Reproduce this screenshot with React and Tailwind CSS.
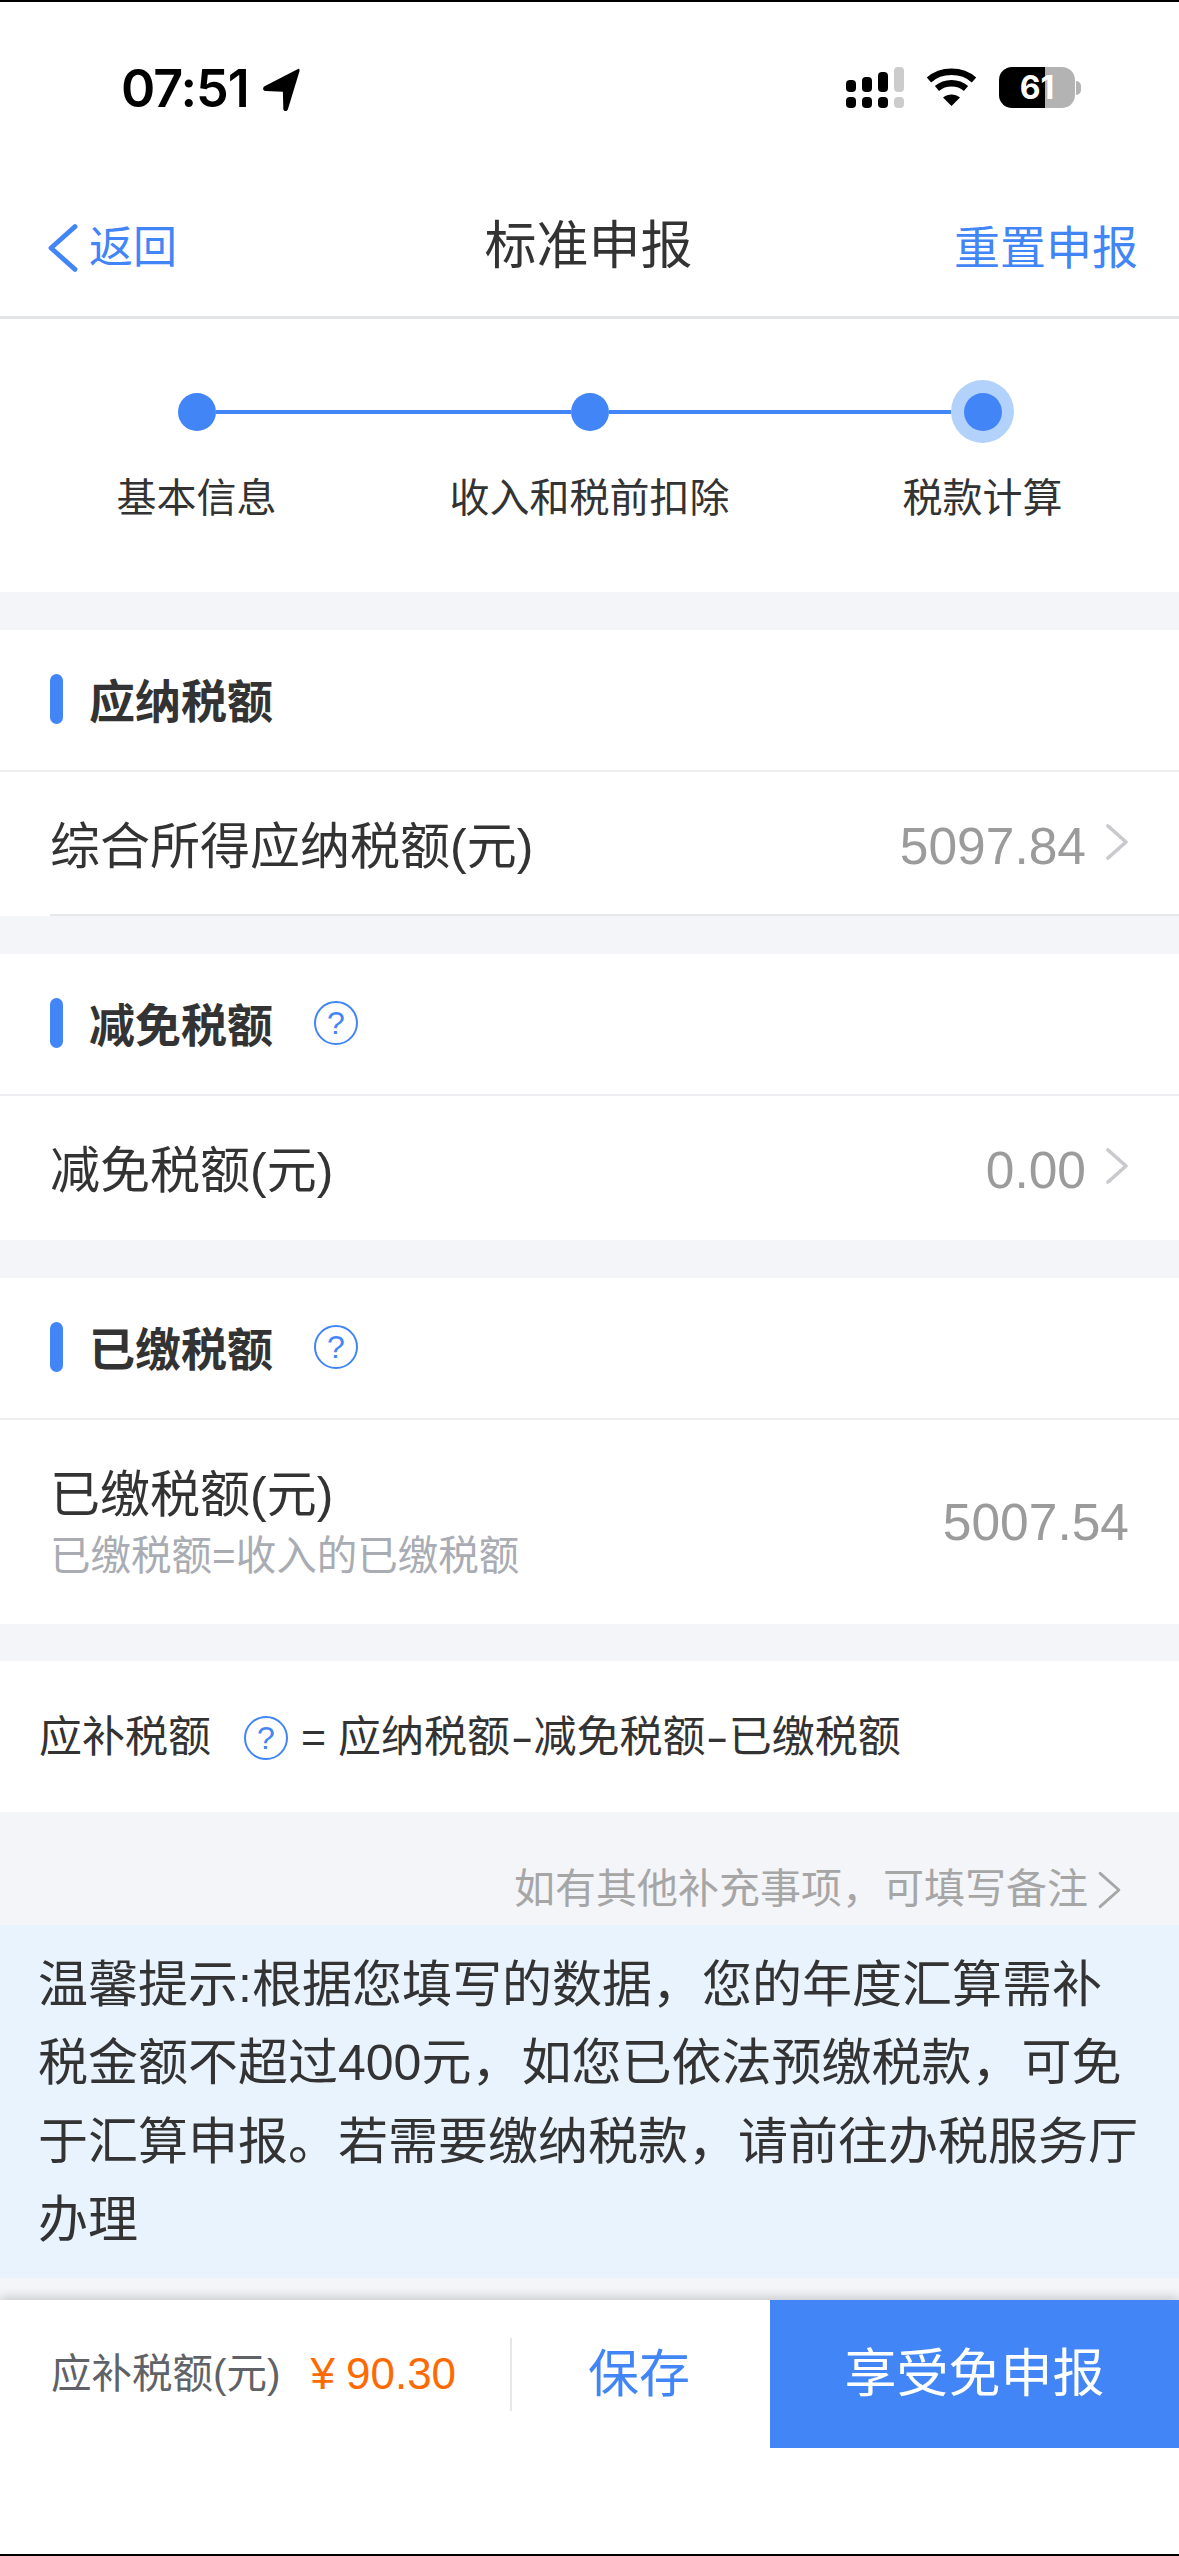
import React from 'react';

const BLUE = '#4285f6';

function Chevron({ className, color = '#c8c9cd', width = 3.6 }) {
  return (
    <svg viewBox="0 0 24 36" className={className} fill="none">
      <path d="M3 2 L21 18 L3 34" stroke={color} strokeWidth={width} strokeLinecap="round" strokeLinejoin="round" />
    </svg>
  );
}

function Help() {
  return (
    <span className="flex h-[44px] w-[44px] shrink-0 items-center justify-center rounded-full border-2 border-[#4285f6] text-[32px] font-light leading-none text-[#4285f6]">
      ?
    </span>
  );
}

function SectionHeader({ title, help }) {
  return (
    <div className="flex h-[142px] items-center border-b-2 border-[#eceef1] pl-[50px]">
      <span className="mb-[2px] h-[50px] w-[13px] rounded-full bg-[#4285f6]" />
      <span className="ml-[26px] mt-[4px] text-[46px] font-bold leading-none text-[#333]">{title}</span>
      {help && (
        <span className="mb-[2px] ml-[41px]">
          <Help />
        </span>
      )}
    </div>
  );
}

function ValueRow({ label, value, divider }) {
  return (
    <div className="relative flex h-[144px] items-center pl-[50px] pr-[50px] pt-[6px]">
      <span className="text-[50px] leading-none text-[#333]">{label}</span>
      <span className="ml-auto flex items-center">
        <span className="text-[51.5px] leading-none text-[#9b9b9b]">{value}</span>
        <Chevron className="mb-[10px] ml-[19px] h-[36px] w-[24px]" />
      </span>
      {divider && <span className="absolute bottom-0 left-[50px] right-0 h-[2px] bg-[#e6e8ec]" />}
    </div>
  );
}

function Band({ h }) {
  return <div className={h + ' bg-[#f4f5f9]'} />;
}

function StatusBar() {
  return (
    <div className="flex h-[116px] items-start pl-[121px] pr-[98px] pt-[60px]">
      <span className="font-['Inter',sans-serif] text-[52px] font-semibold leading-[54px] tracking-[-1px] text-black">07:51</span>
      <svg viewBox="0 0 40 48" className="ml-[13px] mt-[6px] h-[44px] w-[39px]">
        <path d="M38 1 C39.5 0.5 40 2 39.6 3.5 L27 45 C26 48 22 47.5 22 44.5 L21.5 26 L2.5 25 C-0.5 24.8 -0.8 21.5 1.5 20 Z" fill="#000" />
      </svg>
      <div className="ml-auto flex items-start pt-[5px]">
        <svg viewBox="0 0 58 41" className="h-[41px] w-[58px]">
          <rect x="0" y="13" width="10" height="12" rx="4" fill="#000" />
          <rect x="16" y="10" width="10" height="15" rx="4" fill="#000" />
          <rect x="32" y="5" width="10" height="20" rx="4" fill="#000" />
          <rect x="48" y="0" width="10" height="25" rx="4" fill="#ccc" />
          <rect x="0" y="30" width="10" height="11" rx="4" fill="#000" />
          <rect x="16" y="30" width="10" height="11" rx="4" fill="#000" />
          <rect x="32" y="30" width="10" height="11" rx="4" fill="#000" />
          <rect x="48" y="30" width="10" height="11" rx="4" fill="#ccc" />
        </svg>
        <svg viewBox="0 0 51 38" className="ml-[22px] mt-[1px] h-[38px] w-[51px]" fill="none">
          <path d="M3 12 C15 1 36 1 48 12" stroke="#000" strokeWidth="6.5" />
          <path d="M11 20.5 C19 13.5 32 13.5 40 20.5" stroke="#000" strokeWidth="6.5" />
          <path d="M25.5 38 L17 29.5 C22 25.5 29 25.5 34 29.5 Z" fill="#000" />
        </svg>
        <div className="ml-[22px] flex items-center">
          <span className="flex h-[41px] w-[76px] items-center justify-center rounded-[13px] bg-[linear-gradient(to_right,#000_61%,#b3b3b3_61%)] font-['Inter',sans-serif] text-[32px] font-bold leading-none text-white">
            61
          </span>
          <span className="ml-[1px] h-[14px] w-[5px] rounded-r-full bg-[#b3b3b3]" />
        </div>
      </div>
    </div>
  );
}

function NavBar() {
  return (
    <div className="grid h-[201px] grid-cols-3 items-center border-b-[3px] border-[#e3e4e8] pl-[47px] pr-[41px] pt-[62px]">
      <div className="flex items-center">
        <Chevron className="h-[52px] w-[32px] -scale-x-100" color={BLUE} />
        <span className="ml-[10px] text-[44px] leading-none text-[#4285f6]">返回</span>
      </div>
      <span className="mb-[5px] mr-[8px] whitespace-nowrap text-center text-[52px] leading-[60px] text-[#333]">标准申报</span>
      <span className="text-right text-[46px] leading-none text-[#4285f6]">重置申报</span>
    </div>
  );
}

function Stepper() {
  return (
    <div className="h-[273px] pt-[61px]">
      <div className="flex h-[63px] items-center pl-[178px]">
        <span className="h-[38px] w-[38px] rounded-full bg-[#4285f6]" />
        <span className="h-[4px] w-[355px] bg-[#4285f6]" />
        <span className="h-[38px] w-[38px] rounded-full bg-[#4285f6]" />
        <span className="h-[4px] w-[342px] bg-[#4285f6]" />
        <span className="flex h-[63px] w-[63px] items-center justify-center rounded-full bg-[#b3d2fb]">
          <span className="h-[38px] w-[38px] rounded-full bg-[#4285f6]" />
        </span>
      </div>
      <div className="mt-[27px] grid grid-cols-3 text-center text-[40px] leading-[56px] text-[#333]">
        <span>基本信息</span>
        <span>收入和税前扣除</span>
        <span>税款计算</span>
      </div>
    </div>
  );
}

export default function App() {
  return (
    <div className="flex h-[2556px] w-[1179px] flex-col overflow-hidden border-y-2 border-black bg-white font-['Liberation_Sans','Noto_Sans_CJK_SC',sans-serif]">
      <StatusBar />
      <NavBar />
      <Stepper />

      <Band h="h-[38px]" />
      <SectionHeader title="应纳税额" />
      <ValueRow label="综合所得应纳税额(元)" value="5097.84" divider />

      <Band h="h-[38px]" />
      <SectionHeader title="减免税额" help />
      <ValueRow label="减免税额(元)" value="0.00" />

      <Band h="h-[38px]" />
      <SectionHeader title="已缴税额" help />
      <div className="flex h-[204px] items-center px-[50px]">
        <div className="flex flex-col">
          <span className="text-[50px] leading-[60px] text-[#333]">已缴税额(元)</span>
          <span className="mt-[8px] text-[40.5px] leading-[46px] text-[#a9acb3]">已缴税额=收入的已缴税额</span>
        </div>
        <span className="ml-auto mt-[2px] text-[51.5px] leading-none text-[#9b9b9b]">5007.54</span>
      </div>

      <Band h="h-[37px]" />
      <div className="flex h-[151px] items-center pl-[39px] pt-[2px] text-[43px] leading-none text-[#333]">
        <span>应补税额</span>
        <span className="ml-[33px]">
          <Help />
        </span>
        <span className="ml-[13px]">
          = 应纳税额<span className="mx-[4.5px] inline-block scale-x-[1.6]">-</span>减免税额<span className="mx-[4.5px] inline-block scale-x-[1.6]">-</span>已缴税额
        </span>
      </div>

      <div className="flex h-[113px] items-center justify-end bg-[#f4f5f9] pr-[57px] pt-[42px] text-[41px] leading-none text-[#a6a6a6]">
        <span>如有其他补充事项，可填写备注</span>
        <Chevron className="ml-[9px] h-[40px] w-[25px]" color="#a6a6a6" width={2.8} />
      </div>

      <div className="h-[353px] bg-[#e8f3fe] pl-[38px] pr-[40px] pt-[21px] text-[50px] leading-[78.3px] text-[#333]">
        温馨提示:根据您填写的数据，您的年度汇算需补税金额不超过400元，如您已依法预缴税款，可免于汇算申报。若需要缴纳税款，请前往办税服务厅办理
      </div>

      <Band h="h-[22px]" />
      <div className="relative flex flex-1 items-start bg-white shadow-[0_-3px_10px_rgba(0,0,0,0.18)]">
        <div className="flex h-[148px] flex-1 items-center pl-[51px]">
          <span className="text-[40.5px] leading-none text-[#5f6368]">应补税额(元)</span>
          <span className="ml-[30px] text-[44px] leading-none text-[#ff6a00]">¥</span>
          <span className="ml-[11px] text-[44px] leading-none text-[#ff6a00]">90.30</span>
          <span className="ml-[54px] h-[73px] w-[2px] bg-[#e5e7eb]" />
          <span className="ml-[76px] text-[51px] leading-none text-[#4285f6]">保存</span>
        </div>
        <div className="flex h-[148px] w-[409px] items-center justify-center bg-[#4285f6] text-[52px] leading-none text-white">
          享受免申报
        </div>
      </div>
    </div>
  );
}
